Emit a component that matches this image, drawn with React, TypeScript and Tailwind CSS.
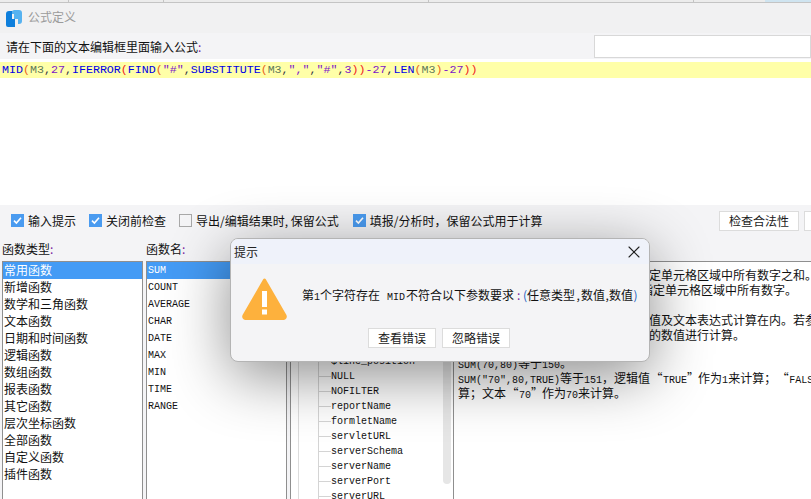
import { X } from "lucide-react";

const CJK = "font-['Noto_Sans_CJK_SC','Noto_Sans',sans-serif]";
const MONO = "font-['Liberation_Mono','Noto_Sans_CJK_SC',monospace]";

const BLUE = "text-[#0000e6]";
const RED = "text-[#f02020]";
const ORANGE = "text-[#e8601c]";
const CELL = "text-[#5f7a5a]";
const NUM = "text-[#7a14c8]";
const DARK = "text-[#333344]";

const formula: [string, string][] = [
  ["MID", BLUE], ["(", ORANGE], ["M3", CELL], [",", DARK], ["27", NUM], [",", DARK],
  ["IFERROR", BLUE], ["(", RED], ["FIND", BLUE], ["(", ORANGE], ['"#"', NUM], [",", DARK],
  ["SUBSTITUTE", BLUE], ["(", ORANGE], ["M3", CELL], [",", DARK], ['","', NUM], [",", DARK], ['"#"', NUM], [",", DARK], ["3", NUM],
  ["))", RED], ["-", NUM], ["27", NUM], [",", DARK], ["LEN", BLUE], ["(", ORANGE], ["M3", CELL], [")", ORANGE], ["-", NUM], ["27", NUM], ["))", RED],
];

const types = ["常用函数", "新增函数", "数学和三角函数", "文本函数", "日期和时间函数", "逻辑函数", "数组函数", "报表函数", "其它函数", "层次坐标函数", "全部函数", "自定义函数", "插件函数"];
const names = ["SUM", "COUNT", "AVERAGE", "CHAR", "DATE", "MAX", "MIN", "TIME", "RANGE"];
const params = ["$row", "$column", "$sheetName", "$page", "$totalPage", "$line", "$line_position", "NULL", "NOFILTER", "reportName", "formletName", "servletURL", "serverSchema", "serverName", "serverPort", "serverURL"];

const checks: [string, boolean][] = [
  ["输入提示", true],
  ["关闭前检查", true],
  ["导出/编辑结果时, 保留公式", false],
  ["填报/分析时，保留公式用于计算", true],
];

function Check({ label, on }: { label: string; on: boolean }) {
  return (
    <label className="flex items-center gap-[4px] nth-3:mr-[1px]">
      {on ? (
        <span className="flex h-[13px] w-[13px] items-center justify-center bg-[#4a9bf0]">
          <svg width="11" height="11" viewBox="0 0 11 11" fill="none">
            <path d="M2 5.6L4.4 8L9 2.8" stroke="#fff" strokeWidth="1.6" />
          </svg>
        </span>
      ) : (
        <span className="h-[13px] w-[13px] border border-[#a8a8a8] bg-[#f4f4f6]" />
      )}
      <span className="whitespace-nowrap">{label}</span>
    </label>
  );
}

function Btn({ label, w }: { label: string; w: string }) {
  return (
    <div className={`flex h-[20px] items-center justify-center border border-[#dcdcdc] bg-white text-[12px] text-[#1a1a1a] ${w}`}>
      {label}
    </div>
  );
}

// latin runs in the description use the wider mono face
function M({ children }: { children: string }) {
  return <span className={`text-[10px] ${MONO}`}>{children}</span>;
}

function Q({ children, w }: { children: string; w: string }) {
  return <span className={`inline-block text-center ${w}`}>{children}</span>;
}

export default function App() {
  return (
    <div className={`relative h-[499px] w-[811px] overflow-hidden bg-[#f4f4f6] text-[12px] leading-none text-[#111] ${CJK}`}>
      {/* window behind, only its bottom edge shows */}
      <div className="flex h-[3px] border-b border-[#c4c4c4] bg-[#ececec]">
        <div className="w-[69px] border-r border-[#c4c4c4]" />
        <div className="w-[95px] border-r border-[#c4c4c4]" />
        <div className="w-[265px] border-r border-[#c4c4c4]" />
        <div className="w-[265px] border-r border-[#c4c4c4]" />
        <div className="w-[71px]" />
        <div className="flex-1 bg-[#cfe4f0]" />
      </div>

      <div className="flex h-[30px] items-center gap-[6px] bg-[#f1f1f2] pl-[6px] text-[#9b9b9b]">
        <svg width="16" height="17" viewBox="0 0 16 17">
          <path d="M0 4a3 3 0 0 1 3-3h3v16H2a2 2 0 0 1-2-2z" fill="#0f7fdc" />
          <path d="M6 1l2-1h5a3 3 0 0 1 3 3v8a3 3 0 0 1-3 3h-1V9H8V4H6z" fill="#56b2f0" />
          <path d="M6 9h3v8H6z" fill="#0f7fdc" />
        </svg>
        <span className="pb-[2px]">公式定义</span>
      </div>

      <div className="flex h-[26px] items-center justify-between pl-[6px]">
        <span className="pt-[2px]">请在下面的文本编辑框里面输入公式<span className="text-[#7a1fa0]">:</span></span>
        <div className="h-[23px] w-[217px] border border-[#d8d8d8] bg-white" />
      </div>

      <div className="h-[146px] bg-white pt-[3px]">
        <div className={`flex h-[16px] items-center bg-[#ffffa8] pl-[2px] text-[11.65px] ${MONO}`}>
          <span className="whitespace-pre">
            {formula.map(([t, c], i) => (
              <span key={i} className={c}>{t}</span>
            ))}
          </span>
        </div>
      </div>

      <div className="flex h-[31px] items-center justify-between pl-[11px]">
        <div className="flex gap-[13px]">
          {checks.map(([label, on]) => (
            <Check key={label} label={label} on={on} />
          ))}
        </div>
        <div className="flex gap-[5px]">
          <Btn label="检查合法性" w="w-[80px]" />
          <Btn label="" w="w-[7px] border-r-0" />
        </div>
      </div>

      <div className="flex h-[20px] items-end pb-[1px] pl-[2px]">
        <span className="w-[144px]">函数类型<span className="text-[#7a1fa0]">:</span></span>
        <span>函数名<span className="text-[#7a1fa0]">:</span></span>
      </div>

      <div className="mt-[5px] flex h-[238px] pl-[2px]">
        <div className="w-[141px] border-x border-t border-[#8f8f8f] bg-white">
          {types.map((t, i) => (
            <div key={t} className={`flex h-[17px] items-center pb-[2px] pl-[1px] ${i === 0 ? "bg-[#449bf5] text-white" : ""}`}>{t}</div>
          ))}
        </div>
        <div className={`ml-[3px] w-[141px] border-x border-t border-[#8f8f8f] bg-white text-[10px] ${MONO}`}>
          {names.map((n, i) => (
            <div key={n} className={`flex h-[17px] items-center pl-[1px] ${i === 0 ? "bg-[#449bf5] text-white" : ""}`}>{n}</div>
          ))}
        </div>
        <div className={`ml-[3px] flex w-[163px] border-t border-l border-[#8f8f8f] bg-white text-[10px] ${MONO}`}>
          <div className="ml-[7px] w-[20px] border-l border-[#dcdcdc]">
            <div className="ml-[19px] w-[20px] border-l border-[#d4d4d4] pt-[2px]">
              {params.map((p) => (
                <div key={p} className="flex h-[15px] items-center whitespace-nowrap">
                  <span className="h-px w-[12px] shrink-0 bg-[#d4d4d4]" />
                  <span className="shrink-0">{p}</span>
                </div>
              ))}
            </div>
          </div>
          <div className="flex-1" />
          <div className="mt-[10px] mb-[15px] w-[8px] rounded-b-sm bg-[#e6e6e6]" />
          <div className="w-[2px]" />
        </div>
        <div className="flex-1 overflow-hidden border-t border-l border-[#8f8f8f] bg-white pt-[5px] text-[12px] whitespace-nowrap">
          <div className="flex h-[15px] items-center pl-[195px]">定单元格区域中所有数字之和。</div>
          <div className="flex h-[15px] items-center pl-[187px]">指定单元格区域中所有数字。</div>
          <div className="h-[15px]" />
          <div className="flex h-[15px] items-center pl-[195px]">值及文本表达式计算在内。若参</div>
          <div className="flex h-[15px] items-center pl-[195px]">的数值进行计算。</div>
          <div className="h-[15px]" />
          <div className="h-[15px] pl-[4px]"><M>SUM(70,80)</M>等于<M>150</M>。</div>
          <div className="h-[15px] pl-[4px]">
            <M>{'SUM("70",80,TRUE)'}</M>等于<M>151</M>，逻辑值<Q w="w-[13px]">“</Q><M>TRUE</M><Q w="w-[11px]">”</Q>作为<M>1</M>来计算；<Q w="w-[13px]">“</Q><M>FALSE</M><Q w="w-[11px]">”</Q>作为<M>0</M>来计
          </div>
          <div className="h-[15px] pl-[4px]">
            算；文本<Q w="w-[13px]">“</Q><M>70</M><Q w="w-[11px]">”</Q>作为<M>70</M>来计算。
          </div>
        </div>
      </div>

      {/* 提示 dialog */}
      <div className="absolute top-[238px] left-[230px] w-[420px] overflow-hidden rounded-[8px] border border-[#b4b4b4] bg-[#f4f4f6] shadow-[0_14px_60px_rgba(0,0,0,0.45)]">
        <div className="flex h-[25px] items-center justify-between bg-[#eff2fa] pr-[5px] pl-[3px] text-[#222]">
          <span>提示</span>
          <X size={20} strokeWidth={1.3} className="text-[#222]" />
        </div>
        <div className="flex h-[64px] items-start pt-[13px] pl-[10px]">
          <svg width="47" height="43" viewBox="0 0 47 43" className="shrink-0">
            <path d="M23.5 3L44 38.5a2 2 0 0 1-2 3H5a2 2 0 0 1-2-3z" fill="#fdb13d" stroke="#fdb13d" strokeWidth="3" strokeLinejoin="round" />
            <path d="M21 14h5v16h-5zM21 32.5h5v5h-5z" fill="#fff" />
          </svg>
          <span className="mt-[12px] ml-[14px] whitespace-nowrap text-[#111]">
            第<M>1</M>个字符存在<Q w="w-[7px]"> </Q><M>MID</M><Q w="w-[1px]"> </Q>不符合以下参数要求<Q w="w-[9px] text-[#7a1fa0]">:</Q>
            <Q w="w-[4px] text-[#2060c0]">(</Q>任意类型<Q w="w-[6px]">,</Q>数值<Q w="w-[4px]">,</Q>数值<Q w="w-[5px] text-[#2060c0]">)</Q>
          </span>
        </div>
        <div className="flex gap-[6px] pb-[13px] pl-[137px]">
          <Btn label="查看错误" w="w-[68px]" />
          <Btn label="忽略错误" w="w-[68px]" />
        </div>
      </div>
    </div>
  );
}
